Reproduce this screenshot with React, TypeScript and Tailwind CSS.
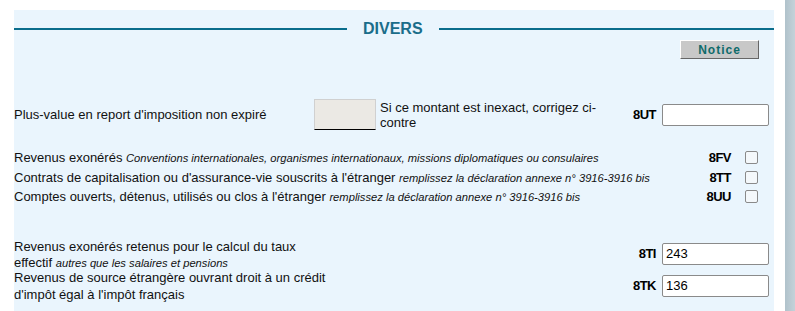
import React from "react";

const rowsCheck = [
  {
    label: "Revenus exonérés",
    note: "Conventions internationales, organismes internationaux, missions diplomatiques ou consulaires",
    code: "8FV",
  },
  {
    label: "Contrats de capitalisation ou d'assurance-vie souscrits à l'étranger",
    note: "remplissez la déclaration annexe n° 3916-3916 bis",
    code: "8TT",
  },
  {
    label: "Comptes ouverts, détenus, utilisés ou clos à l'étranger",
    note: "remplissez la déclaration annexe n° 3916-3916 bis",
    code: "8UU",
  },
];

function Field({ value }: { value?: string }) {
  return (
    <input
      readOnly
      value={value ?? ""}
      className="w-[107px] h-[22px] bg-white border border-[#8a8a8a] rounded-[2px] px-[3px] text-[13px] text-black outline-none"
    />
  );
}

function Code({ children }: { children: React.ReactNode }) {
  return (
    <span className="text-[13px] font-bold tracking-[-0.5px] text-black">{children}</span>
  );
}

export default function App() {
  return (
    <div className="flex h-[311px] bg-white font-['Liberation_Sans',Arial,sans-serif] text-[13px] text-[#111] overflow-hidden">
      <div className="ml-[14px] mt-[10px] w-[760px] h-[301px] bg-[#eaf5fd] flex flex-col">
        {/* titre */}
        <div className="flex items-center h-[38px]">
          <div className="w-[333px] h-[2px] bg-[#0a6d8c]" />
          <span className="px-[16px] text-[16px] font-bold text-[#1a6d8a] leading-none">DIVERS</span>
          <div className="flex-1 h-[2px] bg-[#0a6d8c]" />
        </div>

        <div className="flex justify-end pr-[15px] -mt-[8px]">
          <button className="w-[79px] h-[19px] bg-[#c8c8c8] border border-t-white border-l-white border-b-[#666] border-r-[#666] text-[12px] font-bold tracking-[1px] text-[#0e6b6b] leading-none">
            Notice
          </button>
        </div>

        {/* plus-value */}
        <div className="flex items-center mt-[40px] h-[31px]">
          <span className="w-[300px]">Plus-value en report d'imposition non expiré</span>
          <div className="w-[62px] h-[31px] bg-[#ebe9e4] border border-[#d0d0d0] border-b-black" />
          <span className="w-[230px] ml-[4px] leading-[15px]">
            Si ce montant est inexact, corrigez ci-contre
          </span>
          <span className="flex-1 text-right pr-[6px]">
            <Code>8UT</Code>
          </span>
          <Field />
          <div className="w-[5px]" />
        </div>

        {/* cases */}
        <div className="flex flex-col mt-[18px]">
          {rowsCheck.map((r) => (
            <div key={r.code} className="flex items-center h-[19.5px]">
              <span className="flex-1 whitespace-nowrap">
                {r.label} <i className="text-[11.2px]">{r.note}</i>
              </span>
              <span className="w-[40px] text-right">
                <Code>{r.code}</Code>
              </span>
              <span className="w-[13px] h-[13px] ml-[14px] mr-[16px] border border-[#8a8a8a] rounded-[2px] bg-[#f4f8fb]" />
            </div>
          ))}
        </div>

        {/* taux effectif */}
        <div className="flex items-center mt-[31px] h-[32px]">
          <span className="w-[330px] leading-[16px] pt-[2px]">
            Revenus exonérés retenus pour le calcul du taux
            <br />
            effectif <i className="text-[11.2px]">autres que les salaires et pensions</i>
          </span>
          <span className="flex-1 text-right pr-[6px]">
            <Code>8TI</Code>
          </span>
          <Field value="243" />
          <div className="w-[5px]" />
        </div>
        <div className="flex items-center h-[32px]">
          <span className="w-[330px] leading-[17px]">
            Revenus de source étrangère ouvrant droit à un crédit
            <br />
            d'impôt égal à l'impôt français
          </span>
          <span className="flex-1 text-right pr-[6px]">
            <Code>8TK</Code>
          </span>
          <Field value="136" />
          <div className="w-[5px]" />
        </div>
      </div>
      <div className="flex-1" />
      <div className="w-[10px] h-[311px] bg-gradient-to-r from-[#b0c2cb] to-[#c4d2d9]" />
    </div>
  );
}
